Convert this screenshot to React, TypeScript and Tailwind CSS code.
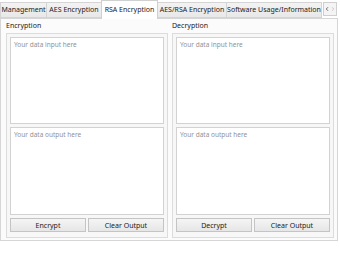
import { ChevronLeft, ChevronRight } from "lucide-react";

const tabs = [
  { label: "Management", w: "w-[47px]" },
  { label: "AES Encryption", w: "w-[56px]" },
  { label: "RSA Encryption", w: "w-[57px]", active: true },
  { label: "AES/RSA Encryption", w: "w-[70px]" },
  { label: "Software Usage/Information", w: "w-[96px]" },
];

const Btn = ({ children }: { children: string }) => (
  <button className="h-[14px] flex-1 border border-[#c4c4c4] bg-gradient-to-b from-[#f5f5f5] to-[#e6e6e6] text-[7px] leading-none text-[#222]">
    {children}
  </button>
);

const Side = ({ title, action }: { title: string; action: string }) => (
  <div className="flex flex-col">
    <div className="h-[14px] flex items-center text-[7px] text-[#222]">{title}</div>
    <div className="flex flex-col gap-[3px] border border-[#dcdcdc] bg-[#f7f7f7] p-[3px] pb-[5px]">
      <div className="h-[87px] border border-[#d2d2d2] bg-white px-[3px] pt-[2px] text-[6.5px] text-[#929292]">
        Your data input here
      </div>
      <div className="h-[88px] border border-[#d2d2d2] bg-white px-[3px] pt-[2px] text-[6.5px] text-[#929292]">
        Your data output here
      </div>
      <div className="flex gap-[2px]">
        <Btn>{action}</Btn>
        <Btn>Clear Output</Btn>
      </div>
    </div>
  </div>
);

export default function App() {
  return (
    <div className="w-[340px] h-[253px] bg-white" style={{ fontFamily: '"Noto Sans", "Open Sans", sans-serif' }}>
      <div className="w-[338px]">
        <div className="flex items-end h-[18px]">
          {tabs.map((t) =>
            t.active ? (
              <div
                key={t.label}
                className={`${t.w} h-[19px] -mb-px -ml-px relative z-10 border border-b-0 border-[#d0d0d0] bg-white flex items-center justify-center text-[7px] text-[#222] whitespace-nowrap`}
              >
                {t.label}
              </div>
            ) : (
              <div
                key={t.label}
                className={`${t.w} h-[16px] border border-[#d4d4d4] -ml-px first:ml-0 bg-gradient-to-b from-[#f3f3f3] to-[#e8e8e8] flex items-center justify-center text-[7px] text-[#222] whitespace-nowrap overflow-hidden`}
              >
                {t.label}
              </div>
            )
          )}
          <div className="ml-[1px] flex h-[14px] mb-[2px] border border-[#cfcfcf] bg-[#f4f4f4]">
            <div className="w-[6px] flex items-center justify-center text-[#444]">
              <ChevronLeft size={6} strokeWidth={3} />
            </div>
            <div className="w-[6px] flex items-center justify-center text-[#bbb]">
              <ChevronRight size={6} strokeWidth={3} />
            </div>
          </div>
        </div>
        <div className="h-[223px] border border-[#d6d6d6] bg-[#fbfbfb] pl-[5px] pr-[3px] grid grid-cols-2 gap-[4px]">
          <Side title="Encryption" action="Encrypt" />
          <Side title="Decryption" action="Decrypt" />
        </div>
      </div>
    </div>
  );
}
